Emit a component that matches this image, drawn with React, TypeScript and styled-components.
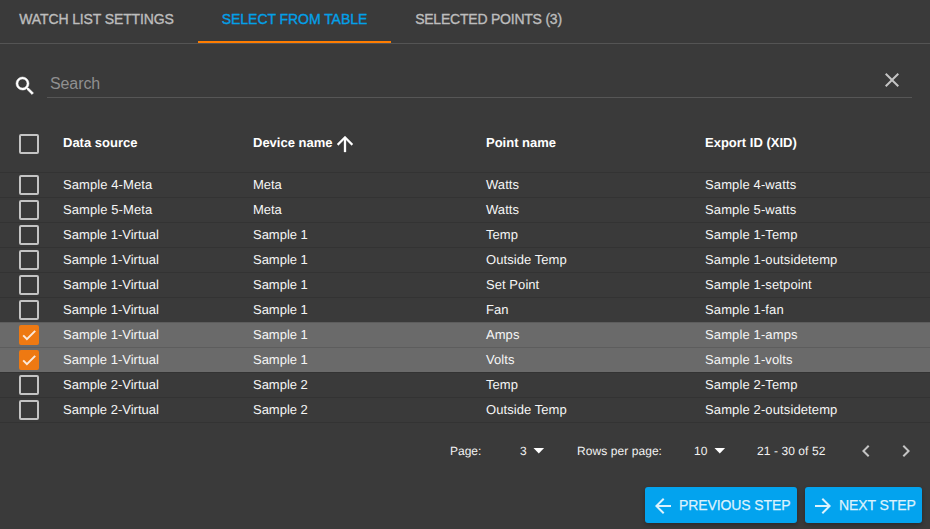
import React, { useState } from 'react';
import styled, { createGlobalStyle } from 'styled-components';

const GlobalStyle = createGlobalStyle`
  * { box-sizing: border-box; }
  body {
    margin: 0;
    background: #3a3a3a;
    color: #fff;
    font-family: "Liberation Sans", Arial, sans-serif;
    text-rendering: geometricPrecision;
    -webkit-font-smoothing: antialiased;
  }
  button { font-family: inherit; border: 0; margin: 0; padding: 0; cursor: pointer; }
`;

const Page = styled.main`
  display: flex;
  flex-direction: column;
  width: 930px;
  height: 529px;
  overflow: hidden;
  background: #3a3a3a;
`;

const Tabs = styled.nav`
  display: flex;
  height: 44px;
  border-bottom: 1px solid #545454;
`;

const Tab = styled.button<{ $width: number; $active?: boolean; $spacing: number; $inset?: number }>`
  width: ${(p) => p.$width}px;
  height: 43px;
  padding: 0 ${(p) => p.$inset ?? 0}px 4px 0;
  background: none;
  border-bottom: 2px solid ${(p) => (p.$active ? '#ff7d00' : 'transparent')};
  color: ${(p) => (p.$active ? '#03a0e8' : '#bdbdbd')};
  font-size: 14px;
  line-height: 20px;
  letter-spacing: ${(p) => p.$spacing}px;
  white-space: nowrap;
  -webkit-text-stroke: 0.35px currentColor;
`;

const Icon = styled.svg`
  display: block;
  flex: none;
  width: 24px;
  height: 24px;
  fill: currentColor;
`;

const SearchRow = styled.div`
  display: flex;
  height: 76px;
  padding: 22px 18px 0 13px;
`;

const SearchIcon = styled(Icon)`
  margin: 8px 10px 0 0;
  stroke: currentColor;
  stroke-width: 0.5;
`;

const SearchField = styled.div`
  display: flex;
  flex: 1;
  height: 32px;
  padding: 2px 8px 0 3px;
  border-bottom: 1px solid #565656;
  color: #c4c4c4;
`;

const SearchInput = styled.input`
  flex: 1;
  min-width: 0;
  height: 29px;
  padding: 2px 0 0;
  border: 0;
  outline: 0;
  background: none;
  color: #fff;
  font: 16px "Liberation Sans", Arial, sans-serif;
  letter-spacing: -0.1px;
  &::placeholder { color: #909090; opacity: 1; }
`;

const Table = styled.div`
  display: flex;
  flex-direction: column;
  border-bottom: 1px solid #333;
`;

const Row = styled.div<{ $selected?: boolean }>`
  display: grid;
  grid-template-columns: 44px 190px 233px 219px 1fr;
  align-items: center;
  height: 25px;
  padding-left: 19px;
  border-top: 1px solid ${(p) => (p.$selected ? '#5d5d5d' : '#333')};
  background: ${(p) => (p.$selected ? '#6a6a6a' : 'transparent')};
`;

const HeaderRow = styled(Row)`
  height: 52px;
  align-items: start;
  padding-top: 14px;
  border-top: 0;
`;

const HeaderCell = styled.div`
  display: flex;
  font-size: 13px;
  font-weight: 700;
  line-height: 18px;
  white-space: nowrap;
`;

const SortLabel = styled.span`
  width: 80px;
`;

const SortIcon = styled(Icon)`
  margin: -2px 0 0;
  stroke: currentColor;
  stroke-width: 0.3;
`;

const Cell = styled.div<{ $spacing?: number }>`
  padding-bottom: 1px;
  color: #f6f6f6;
  font-size: 13px;
  line-height: 18px;
  letter-spacing: ${(p) => p.$spacing ?? 0}px;
  white-space: nowrap;
`;

const Box = styled.button<{ $checked?: boolean }>`
  width: 20px;
  height: 20px;
  border: 2px solid ${(p) => (p.$checked ? '#ee7912' : '#c4c4c4')};
  border-radius: 2px;
  background: ${(p) => (p.$checked ? '#ee7912' : 'transparent')};
`;

const Tick = styled.svg`
  display: block;
  width: 16px;
  height: 16px;
  fill: none;
  stroke: #fbe9da;
  stroke-width: 2;
`;

const Pagination = styled.div`
  display: flex;
  align-items: center;
  height: 57px;
  padding: 0 12px 2px 0;
  justify-content: flex-end;
  font-size: 12px;
  color: #f2f2f2;
`;

const PageText = styled.span<{ $width: number; $spacing?: number }>`
  width: ${(p) => p.$width}px;
  letter-spacing: ${(p) => p.$spacing ?? 0}px;
  white-space: nowrap;
`;

const Caret = styled(Icon)<{ $gap: number }>`
  margin: 0 ${(p) => p.$gap}px 2px 0;
  color: #fff;
`;

const PageButton = styled.button`
  width: 24px;
  height: 24px;
  margin-left: 16px;
  background: none;
  color: #c4c4c4;
`;

const Actions = styled.footer`
  display: flex;
  justify-content: flex-end;
  gap: 8px;
  padding: 7px 8px 0 0;
`;

const StepButton = styled.button<{ $width: number; $spacing: number }>`
  display: flex;
  align-items: center;
  width: ${(p) => p.$width}px;
  height: 36px;
  padding: 0 0 0 6px;
  gap: 4px;
  border-radius: 3px;
  background: #03a3ee;
  box-shadow: 0 2px 4px rgba(0, 0, 0, 0.28);
  color: #dcf2fd;
  font-size: 14px;
  line-height: 20px;
  letter-spacing: ${(p) => p.$spacing}px;
  white-space: nowrap;
  -webkit-text-stroke: 0.25px currentColor;
`;

const StepIcon = styled(Icon)`
  margin-top: 2px;
`;

const paths = {
  search: 'M15.5 14h-.79l-.28-.27A6.47 6.47 0 0 0 16 9.5 6.5 6.5 0 1 0 9.5 16c1.61 0 3.09-.59 4.23-1.57l.27.28v.79l5 4.99L20.49 19l-4.99-5zm-6 0C7.01 14 5 11.99 5 9.5S7.01 5 9.5 5 14 7.01 14 9.5 11.99 14 9.5 14z',
  close: 'M19 6.41L17.59 5 12 10.59 6.41 5 5 6.41 10.59 12 5 17.59 6.41 19 12 13.41 17.59 19 19 17.59 13.41 12z',
  up: 'M4 12l1.41 1.41L11 7.83V20h2V7.83l5.58 5.59L20 12l-8-8-8 8z',
  back: 'M20 11H7.83l5.59-5.59L12 4l-8 8 8 8 1.41-1.41L7.83 13H20v-2z',
  forward: 'M12 4l-1.41 1.41L16.17 11H4v2h12.17l-5.58 5.59L12 20l8-8z',
  caret: 'M6.5 10l5.3 5.5 5.3-5.5z',
  left: 'M15.41 7.41L14 6l-6 6 6 6 1.41-1.41L10.83 12z',
  right: 'M10 6L8.59 7.41 13.17 12l-4.58 4.59L10 18l6-6z',
};

interface Point {
  source: string;
  device: string;
  name: string;
  xid: string;
  selected?: boolean;
}

const initialPoints: Point[] = [
  { source: 'Sample 4-Meta', device: 'Meta', name: 'Watts', xid: 'Sample 4-watts' },
  { source: 'Sample 5-Meta', device: 'Meta', name: 'Watts', xid: 'Sample 5-watts' },
  { source: 'Sample 1-Virtual', device: 'Sample 1', name: 'Temp', xid: 'Sample 1-Temp' },
  { source: 'Sample 1-Virtual', device: 'Sample 1', name: 'Outside Temp', xid: 'Sample 1-outsidetemp' },
  { source: 'Sample 1-Virtual', device: 'Sample 1', name: 'Set Point', xid: 'Sample 1-setpoint' },
  { source: 'Sample 1-Virtual', device: 'Sample 1', name: 'Fan', xid: 'Sample 1-fan' },
  { source: 'Sample 1-Virtual', device: 'Sample 1', name: 'Amps', xid: 'Sample 1-amps', selected: true },
  { source: 'Sample 1-Virtual', device: 'Sample 1', name: 'Volts', xid: 'Sample 1-volts', selected: true },
  { source: 'Sample 2-Virtual', device: 'Sample 2', name: 'Temp', xid: 'Sample 2-Temp' },
  { source: 'Sample 2-Virtual', device: 'Sample 2', name: 'Outside Temp', xid: 'Sample 2-outsidetemp' },
];

export default function App() {
  const [points, setPoints] = useState(initialPoints);
  const toggle = (index: number) =>
    setPoints(points.map((p, i) => (i === index ? { ...p, selected: !p.selected } : p)));

  return (
    <Page>
      <GlobalStyle />
      <Tabs>
        <Tab $width={198} $spacing={-0.13} $inset={5}>WATCH LIST SETTINGS</Tab>
        <Tab $width={193} $spacing={-0.05} $active>SELECT FROM TABLE</Tab>
        <Tab $width={195} $spacing={-0.22}>SELECTED POINTS (3)</Tab>
      </Tabs>

      <SearchRow>
        <SearchIcon viewBox="0 0 24 24"><path d={paths.search} /></SearchIcon>
        <SearchField>
          <SearchInput placeholder="Search" />
          <Icon viewBox="0 0 24 24"><path d={paths.close} /></Icon>
        </SearchField>
      </SearchRow>

      <Table>
        <HeaderRow>
          <Box aria-label="Select all" />
          <HeaderCell>Data source</HeaderCell>
          <HeaderCell>
            <SortLabel>Device name</SortLabel>
            <SortIcon viewBox="0 0 24 24"><path d={paths.up} /></SortIcon>
          </HeaderCell>
          <HeaderCell>Point name</HeaderCell>
          <HeaderCell>Export ID (XID)</HeaderCell>
        </HeaderRow>
        {points.map((p, i) => (
          <Row key={p.xid} $selected={p.selected}>
            <Box $checked={p.selected} aria-label={p.xid} onClick={() => toggle(i)}>
              {p.selected && (
                <Tick viewBox="0 0 16 16"><path d="M2.2 8.4l3.7 3.7L14.2 3.9" /></Tick>
              )}
            </Box>
            <Cell $spacing={p.source.endsWith('Meta') ? 0.08 : 0}>{p.source}</Cell>
            <Cell $spacing={-0.02}>{p.device}</Cell>
            <Cell $spacing={0.06}>{p.name}</Cell>
            <Cell $spacing={0.12}>{p.xid}</Cell>
          </Row>
        ))}
      </Table>

      <Pagination>
        <PageText $width={70}>Page:</PageText>
        <PageText $width={7}>3</PageText>
        <Caret $gap={26} viewBox="0 0 24 24"><path d={paths.caret} /></Caret>
        <PageText $width={117} $spacing={0.07}>Rows per page:</PageText>
        <PageText $width={14}>10</PageText>
        <Caret $gap={25} viewBox="0 0 24 24"><path d={paths.caret} /></Caret>
        <PageText $width={81} $spacing={0.08}>21 - 30 of 52</PageText>
        <PageButton aria-label="Previous page">
          <Icon viewBox="0 0 24 24"><path d={paths.left} /></Icon>
        </PageButton>
        <PageButton aria-label="Next page">
          <Icon viewBox="0 0 24 24"><path d={paths.right} /></Icon>
        </PageButton>
      </Pagination>

      <Actions>
        <StepButton $width={152} $spacing={-0.1}>
          <StepIcon viewBox="0 0 24 24"><path d={paths.back} /></StepIcon>
          PREVIOUS STEP
        </StepButton>
        <StepButton $width={117} $spacing={-0.1}>
          <StepIcon viewBox="0 0 24 24"><path d={paths.forward} /></StepIcon>
          NEXT STEP
        </StepButton>
      </Actions>
    </Page>
  );
}
